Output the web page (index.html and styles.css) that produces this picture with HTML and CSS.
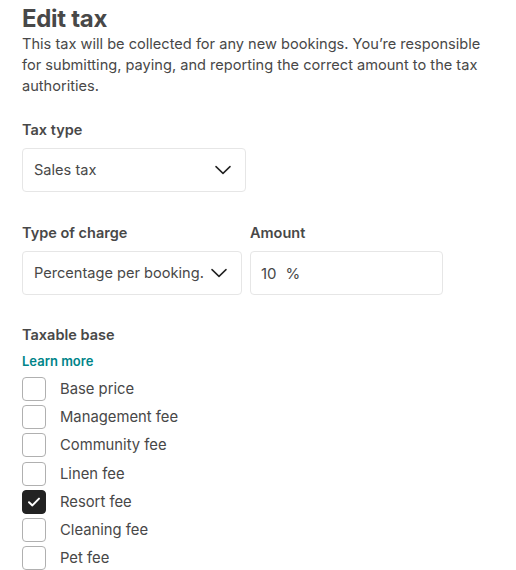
FILE: index.html
```html
<!DOCTYPE html>
<html>
<head>
<meta charset="utf-8">
<link rel="stylesheet" href="styles.css">
</head>
<body>
<div class="page">
  <h1 class="title">Edit tax</h1>
  <p class="desc">This tax will be collected for any new bookings. You’re responsible for submitting, paying, and reporting the correct amount to the tax authorities.</p>

  <div class="field field-taxtype">
    <div class="label">Tax type</div>
    <div class="select select-wide">
      <span class="select-text">Sales tax</span>
      <svg class="chev" width="16" height="10" viewBox="0 0 16 10"><path d="M1 1.6 L8 8.4 L15 1.6" fill="none" stroke="#222" stroke-width="1.5" stroke-linecap="round" stroke-linejoin="round"/></svg>
    </div>
  </div>

  <div class="row">
    <div class="field">
      <div class="label">Type of charge</div>
      <div class="select select-charge">
        <span class="select-text">Percentage per booking.</span>
        <svg class="chev" width="16" height="10" viewBox="0 0 16 10"><path d="M1 1.6 L8 8.4 L15 1.6" fill="none" stroke="#222" stroke-width="1.5" stroke-linecap="round" stroke-linejoin="round"/></svg>
      </div>
    </div>
    <div class="field">
      <div class="label">Amount</div>
      <div class="input-amount">
        <span class="amt">10</span><span class="pct">%</span>
      </div>
    </div>
  </div>

  <div class="field field-base">
    <div class="label">Taxable base</div>
    <a class="learn">Learn more</a>
    <ul class="checks">
      <li><span class="box"></span><span class="ck-label">Base price</span></li>
      <li><span class="box"></span><span class="ck-label">Management fee</span></li>
      <li><span class="box"></span><span class="ck-label">Community fee</span></li>
      <li><span class="box"></span><span class="ck-label">Linen fee</span></li>
      <li><span class="box checked"><svg width="14" height="12" viewBox="0 0 14 12"><path d="M2 6.2 L5.4 9.4 L12 2.6" fill="none" stroke="#fff" stroke-width="2" stroke-linecap="round" stroke-linejoin="round"/></svg></span><span class="ck-label">Resort fee</span></li>
      <li><span class="box"></span><span class="ck-label">Cleaning fee</span></li>
      <li><span class="box"></span><span class="ck-label">Pet fee</span></li>
    </ul>
  </div>
</div>
</body>
</html>
```
FILE: styles.css
```css
html, body {
  margin: 0;
  padding: 0;
  background: #fff;
}
body {
  font-family: "Inter", "Noto Sans", "Liberation Sans", sans-serif;
  color: #484848;
}
.page {
  padding: 4px 0 0 22px;
  width: 465px;
}
.title {
  margin: 0;
  font-size: 24px;
  line-height: 30px;
  font-weight: 700;
  color: #484848;
  letter-spacing: -0.3px;
}
.desc {
  margin: 0;
  font-size: 14.6px;
  line-height: 21px;
  color: #484848;
}
.field-taxtype {
  margin-top: 23px;
}
.label {
  font-size: 14.5px;
  font-weight: 600;
  line-height: 20px;
  color: #484848;
  margin-bottom: 8px;
}
.select {
  box-sizing: border-box;
  height: 44px;
  border: 1px solid #e6e6e6;
  border-radius: 4px;
  display: flex;
  align-items: center;
  padding: 0 14px 0 11px;
  gap: 2px;
}
.select-wide { width: 224px; }
.select-charge { width: 220px; }
.select-text {
  flex: 1;
  font-size: 14.6px;
  white-space: nowrap;
  color: #484848;
}
.chev { flex: none; }
.row {
  display: flex;
  gap: 8px;
  margin-top: 31px;
}
.input-amount {
  box-sizing: border-box;
  width: 193px;
  height: 44px;
  border: 1px solid #e6e6e6;
  border-radius: 4px;
  display: flex;
  align-items: center;
  padding-left: 10px;
  font-size: 15px;
}
.amt { margin-right: 9px; }
.field-base {
  margin-top: 30px;
}
.field-base .label { margin-bottom: 7px; }
.learn {
  display: block;
  font-size: 13px;
  font-weight: 600;
  line-height: 18px;
  color: #008489;
}
.checks {
  list-style: none;
  margin: 7px 0 0;
  padding: 0;
  display: flex;
  flex-direction: column;
  gap: 4.2px;
}
.checks li {
  display: flex;
  align-items: center;
  height: 24px;
}
.box {
  box-sizing: border-box;
  width: 24px;
  height: 24px;
  border: 1px solid #b0b0b0;
  border-radius: 4px;
  display: flex;
  align-items: center;
  justify-content: center;
  flex: none;
}
.box.checked {
  background: #222;
  border-color: #222;
}
.ck-label {
  margin-left: 14px;
  font-size: 14.8px;
  color: #484848;
}
```
